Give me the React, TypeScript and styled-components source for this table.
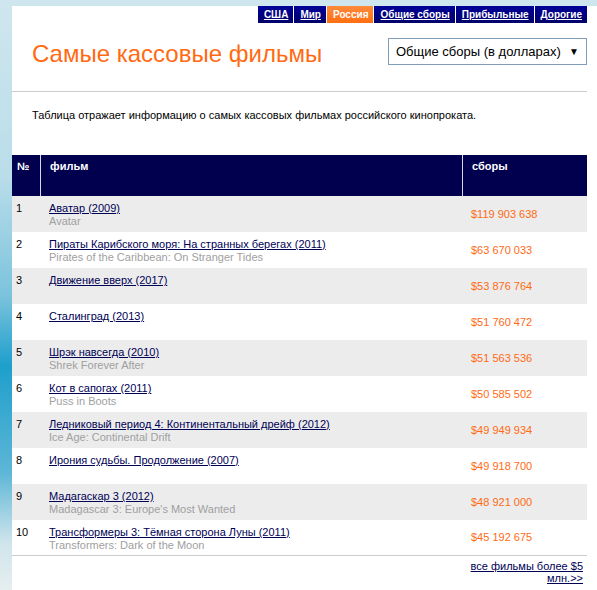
import React from "react";
import styled, { createGlobalStyle } from "styled-components";

const Global = createGlobalStyle`
  html, body { margin: 0; padding: 0; }
  body {
    width: 597px;
    height: 590px;
    overflow: hidden;
    background: linear-gradient(to bottom, #cfe6ee 0%, #b9dde9 30%, #7cc3dd 50%, #1e9fcc 62%, #5db6d6 80%, #cfe5ec 92%, #e6eef0 100%);
    font-family: "Liberation Sans", Arial, sans-serif;
  }
`;

const Page = styled.div`
  margin: 6px 0 0 12px;
  height: 584px;
  background: #fff;
  padding-right: 10px;
  display: flex;
  flex-direction: column;
`;

const Nav = styled.nav`
  display: flex;
  justify-content: flex-end;
  gap: 1px;
`;

const Tab = styled.a<{ $active?: boolean }>`
  display: flex;
  align-items: center;
  height: 17px;
  padding: 0 5px 0 6px;
  font-size: 10px;
  font-weight: bold;
  color: #fff;
  text-decoration: ${(p) => (p.$active ? "none" : "underline")};
  background: ${(p) => (p.$active ? "linear-gradient(#ff8a3a, #ff6f12)" : "linear-gradient(#000099, #00006a)")};
  cursor: pointer;
`;

const Header = styled.div`
  display: flex;
  justify-content: space-between;
  align-items: flex-start;
  padding: 0 0 0 20px;
  height: 68px;
  border-bottom: 1px solid #cccccc;
`;

const Title = styled.h1`
  margin: 17px 0 0 0;
  font-weight: normal;
  font-size: 24px;
  line-height: 28px;
  color: #ff6a13;
`;

const Select = styled.div`
  margin-top: 15px;
  width: 199px;
  height: 27px;
  border: 1px solid #7f9db9;
  display: flex;
  align-items: center;
  justify-content: space-between;
  padding: 0 7px 0 7px;
  font-size: 13px;
  white-space: nowrap;
  color: #000;
  box-sizing: border-box;
`;

const Arrow = styled.span`
  font-size: 10px;
`;

const Intro = styled.p`
  margin: 17px 0 0 20px;
  font-size: 11px;
  line-height: 13px;
  color: #000;
`;

const Table = styled.div`
  margin-top: 33px;
  display: grid;
  grid-template-columns: 28px 1fr 125px;
`;

const HeadCell = styled.div<{ $sep?: boolean }>`
  background: #00004f;
  color: #fff;
  font-weight: bold;
  font-size: 11px;
  line-height: 13px;
  height: 41px;
  box-sizing: border-box;
  padding: 5px 0 0 ${(p) => (p.$sep ? "9px" : "5px")};
  border-left: ${(p) => (p.$sep ? "1px solid #d8d8e8" : "none")};
`;

const Cell = styled.div<{ $odd: boolean; $last: boolean }>`
  background: ${(p) => (p.$odd ? "#ececec" : "#fff")};
  height: 36px;
  box-sizing: border-box;
  font-size: 11px;
  line-height: 13px;
  border-bottom: ${(p) => (p.$last ? "1px solid #cccccc" : "none")};
`;

const NumCell = styled(Cell)`
  padding: 6px 0 0 4px;
  color: #000;
`;

const FilmCell = styled(Cell)`
  padding: 6px 0 0 9px;
`;

const MoneyCell = styled(Cell)`
  display: flex;
  align-items: center;
  padding-left: 9px;
  color: #ff6a13;
`;

const FilmLink = styled.a`
  display: block;
  color: #000055;
  text-decoration: underline;
`;

const Orig = styled.div`
  color: #a0a0a0;
`;

const Footer = styled.div`
  display: flex;
  justify-content: flex-end;
  padding: 4px 4px 0 0;
`;

const MoreLink = styled.a`
  width: 118px;
  text-align: right;
  font-size: 11px;
  line-height: 12px;
  color: #000055;
  text-decoration: underline;
`;

const tabs = ["США", "Мир", "Россия", "Общие сборы", "Прибыльные", "Дорогие"];

const films = [
  ["Аватар (2009)", "Avatar", "$119 903 638"],
  ["Пираты Карибского моря: На странных берегах (2011)", "Pirates of the Caribbean: On Stranger Tides", "$63 670 033"],
  ["Движение вверх (2017)", "", "$53 876 764"],
  ["Сталинград (2013)", "", "$51 760 472"],
  ["Шрэк навсегда (2010)", "Shrek Forever After", "$51 563 536"],
  ["Кот в сапогах (2011)", "Puss in Boots", "$50 585 502"],
  ["Ледниковый период 4: Континентальный дрейф (2012)", "Ice Age: Continental Drift", "$49 949 934"],
  ["Ирония судьбы. Продолжение (2007)", "", "$49 918 700"],
  ["Мадагаскар 3 (2012)", "Madagascar 3: Europe's Most Wanted", "$48 921 000"],
  ["Трансформеры 3: Тёмная сторона Луны (2011)", "Transformers: Dark of the Moon", "$45 192 675"],
];

export default function App() {
  return (
    <>
      <Global />
      <Page>
        <Nav>
          {tabs.map((t) => (
            <Tab key={t} $active={t === "Россия"}>
              {t}
            </Tab>
          ))}
        </Nav>
        <Header>
          <Title>Самые кассовые фильмы</Title>
          <Select>
            <span>Общие сборы (в долларах)</span>
            <Arrow>▼</Arrow>
          </Select>
        </Header>
        <Intro>Таблица отражает информацию о самых кассовых фильмах российского кинопроката.</Intro>
        <Table>
          <HeadCell>№</HeadCell>
          <HeadCell $sep>фильм</HeadCell>
          <HeadCell $sep>сборы</HeadCell>
          {films.map(([ru, en, money], i) => {
            const odd = i % 2 === 0;
            const last = i === films.length - 1;
            return (
              <React.Fragment key={ru}>
                <NumCell $odd={odd} $last={last}>{i + 1}</NumCell>
                <FilmCell $odd={odd} $last={last}>
                  <FilmLink>{ru}</FilmLink>
                  {en && <Orig>{en}</Orig>}
                </FilmCell>
                <MoneyCell $odd={odd} $last={last}>{money}</MoneyCell>
              </React.Fragment>
            );
          })}
        </Table>
        <Footer>
          <MoreLink>все фильмы более $5 млн.&gt;&gt;</MoreLink>
        </Footer>
      </Page>
    </>
  );
}
